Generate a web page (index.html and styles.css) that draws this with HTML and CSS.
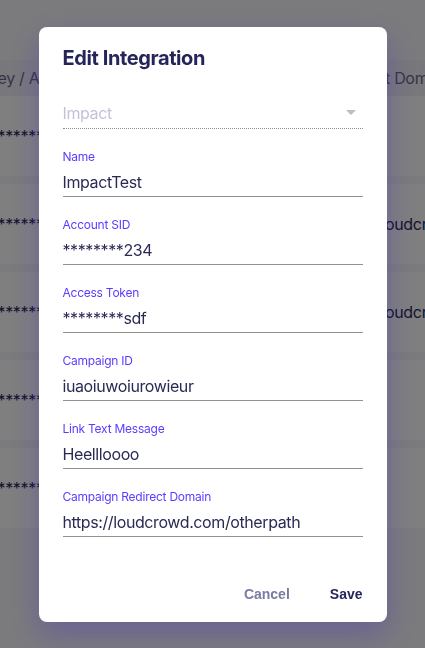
FILE: index.html
```html
<!DOCTYPE html>
<html lang="en">
<head>
    <meta charset="UTF-8">
    <meta name="viewport" content="width=device-width, initial-scale=1.0">
    <title>Edit Integration</title>
    <link rel="stylesheet" href="styles.css">
</head>
<body>

<div class="page">
    <div class="table">
        <div class="table-head">
            <div class="cell">API Key / Account SID</div>
            <div class="cell"></div>
            <div class="cell">Redirect Domain</div>
        </div>
        <div class="table-row">
            <div class="cell">************</div>
            <div class="cell"></div>
            <div class="cell"></div>
        </div>
        <div class="table-row">
            <div class="cell">************</div>
            <div class="cell"></div>
            <div class="cell">https://loudcrowd.com</div>
        </div>
        <div class="table-row">
            <div class="cell">************</div>
            <div class="cell"></div>
            <div class="cell">https://loudcrowd.com</div>
        </div>
        <div class="table-row">
            <div class="cell">************</div>
            <div class="cell"></div>
            <div class="cell"></div>
        </div>
        <div class="table-row">
            <div class="cell">************</div>
            <div class="cell"></div>
            <div class="cell"></div>
        </div>
    </div>
</div>

<div class="overlay">
    <div class="modal">
        <h2>Edit Integration</h2>

        <div class="select">
            <span>Impact</span>
            <span class="arrow"></span>
        </div>

        <div class="field">
            <label for="name">Name</label>
            <input type="text" id="name" value="ImpactTest">
        </div>
        <div class="field">
            <label for="sid">Account SID</label>
            <input type="text" id="sid" value="********234">
        </div>
        <div class="field">
            <label for="token">Access Token</label>
            <input type="text" id="token" value="********sdf">
        </div>
        <div class="field">
            <label for="campaign">Campaign ID</label>
            <input type="text" id="campaign" value="iuaoiuwoiurowieur">
        </div>
        <div class="field">
            <label for="link">Link Text Message</label>
            <input type="text" id="link" value="Heellloooo">
        </div>
        <div class="field">
            <label for="redirect">Campaign Redirect Domain</label>
            <input type="text" id="redirect" value="https://loudcrowd.com/otherpath">
        </div>

        <div class="actions">
            <button class="btn-cancel">Cancel</button>
            <button class="btn-save">Save</button>
        </div>
    </div>
</div>

</body>
</html>
```

FILE: styles.css
```css
body {
    margin: 0;
    font-family: Inter, "Noto Sans", sans-serif;
    background-color: #f6f6fb;
    color: #2a2a55;
    overflow: hidden;
}
.page {
    padding-top: 60px;
    height: 648px;
    box-sizing: border-box;
}
.table {
    margin-left: -41px;
    width: 600px;
}
.table-head, .table-row {
    display: grid;
    grid-template-columns: 200px 171px 229px;
    align-items: center;
    font-size: 16px;
    letter-spacing: -0.02em;
}
.table-head {
    height: 36px;
    background-color: #f1f0f9;
    color: #6c6b8c;
}
.table-row {
    height: 80px;
    background-color: white;
    margin-bottom: 8px;
}
.overlay {
    position: fixed;
    inset: 0;
    background-color: rgba(0, 0, 0, 0.5);
    display: flex;
    justify-content: center;
    align-items: center;
}
.modal {
    width: 348px;
    box-sizing: border-box;
    background-color: white;
    border-radius: 8px;
    padding: 19px 24px 10px 24px;
    box-shadow: 0px 12px 30px rgba(70, 50, 190, 0.35);
    letter-spacing: -0.025em;
}
.modal h2 {
    margin: 0 0 31px 0;
    font-size: 20px;
    line-height: 24px;
    font-weight: 700;
    color: #25255a;
}
.select {
    display: flex;
    justify-content: space-between;
    align-items: center;
    height: 24px;
    padding-bottom: 3px;
    border-bottom: 1px dotted #8e8e8e;
    font-size: 16px;
    color: #c3c2da;
}
.arrow {
    width: 0;
    height: 0;
    margin-right: 7px;
    border-left: 5px solid transparent;
    border-right: 5px solid transparent;
    border-top: 5px solid #bdbdbd;
}
.field {
    margin-top: 20px;
}
.field label {
    display: block;
    font-size: 12px;
    line-height: 16px;
    color: #5b3cff;
    margin-bottom: 5px;
    letter-spacing: -0.02em;
}
.field input {
    display: block;
    width: 100%;
    box-sizing: border-box;
    border: none;
    border-bottom: 1px solid #939393;
    padding: 0 0 2px 0;
    font-family: Inter, "Noto Sans", sans-serif;
    font-size: 16px;
    line-height: 24px;
    height: 27px;
    color: #2a2a55;
    letter-spacing: -0.025em;
    outline: none;
}
.actions {
    display: flex;
    justify-content: flex-end;
    gap: 40px;
    margin-top: 39px;
}
.actions button {
    background: none;
    border: none;
    padding: 8px 0;
    font-family: "Liberation Sans", Arial, sans-serif;
    font-size: 14px;
    line-height: 20px;
    font-weight: 700;
    letter-spacing: 0;
    cursor: pointer;
}
.btn-cancel {
    color: #7a7aa3;
}
.btn-save {
    color: #25255a;
}
```
